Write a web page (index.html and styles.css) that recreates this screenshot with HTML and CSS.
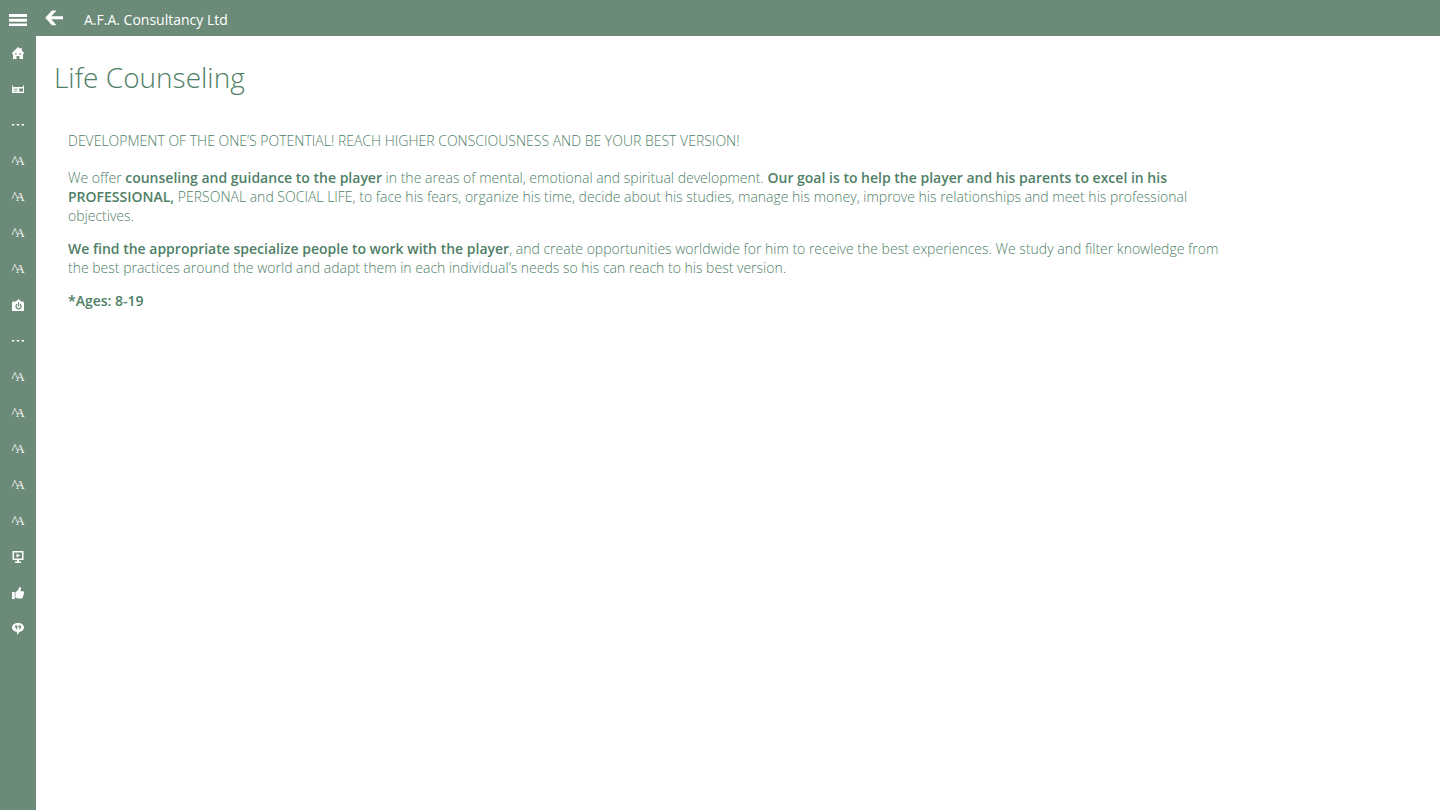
FILE: index.html
```
<!DOCTYPE html>
<html lang="en">
<head>
    <meta charset="UTF-8">
    <meta name="viewport" content="width=device-width, initial-scale=1.0">
    <title>A.F.A. Consultancy Ltd</title>
    <link rel="stylesheet" href="styles.css">
</head>
<body>
    <!-- Icon shapes used more than once -->
    <svg class="defs" aria-hidden="true">
        <symbol id="dots" viewBox="0 0 12 12">
            <path d="M0 5h2.4v1.6H0zM4.8 5h2.4v1.6H4.8zM9.6 5H12v1.6H9.6z"/>
        </symbol>
    </svg>

    <header class="topbar">
        <button type="button" class="menu-button" aria-label="Menu">
            <svg width="18" height="12" viewBox="0 0 18 12"><path d="M0 0h18v3H0zM0 4.7h18v3H0zM0 9.4h18v2.6H0z"/></svg>
        </button>
        <button type="button" class="back-button" aria-label="Back">
            <svg width="18" height="16" viewBox="0 0 18 16"><path d="M7 .5h4.5L6.3 6.3H18v3H6.3l5.2 5.9H7L.2 7.8z"/></svg>
        </button>
        <span class="app-title">A.F.A. Consultancy Ltd</span>
    </header>

    <div class="layout">
        <nav class="sidebar">
            <a href="#" aria-label="Home"><svg viewBox="0 0 12 12"><path fill-rule="evenodd" d="M6 0l2.2 2V1h1.6v2.6L12 6v1h-1v5H7.5V9h-3v3H1V7H0V6zM3.2 6v1.5h1.3V6zM7.5 6v1.5h1.3V6z"/></svg></a>
            <a href="#" aria-label="News"><svg viewBox="0 0 12 12"><path fill-rule="evenodd" d="M0 2.5h1V4h10V2.500h1V10H0zM1.500 5.800v.7h4v-.7zM1.500 7.700v.7h4v-.7zM7.300 5.600v2.800H11V5.600z"/></svg></a>
            <a href="#" aria-label="More"><svg><use href="#dots"/></svg></a>
            <a href="#" class="letters"><small>^</small>A</a>
            <a href="#" class="letters"><small>^</small>A</a>
            <a href="#" class="letters"><small>^</small>A</a>
            <a href="#" class="letters"><small>^</small>A</a>
            <a href="#" aria-label="Photos"><svg viewBox="0 0 12 12"><path fill-rule="evenodd" d="M0 3.500L1 2.500h3L6.500 0 9 2.500h2l1 1V12H0zM5.300 4.500a3.100 3.100 0 1 0 2.500 0v1.400a1.800 1.800 0 1 1-2.500 0zM6 3v4.500h1.100V3z"/></svg></a>
            <a href="#" aria-label="More"><svg><use href="#dots"/></svg></a>
            <a href="#" class="letters"><small>^</small>A</a>
            <a href="#" class="letters"><small>^</small>A</a>
            <a href="#" class="letters"><small>^</small>A</a>
            <a href="#" class="letters"><small>^</small>A</a>
            <a href="#" class="letters"><small>^</small>A</a>
            <a href="#" aria-label="Videos"><svg viewBox="0 0 12 12"><path fill-rule="evenodd" d="M.5 0h11v9H7v1.500h2V12H3v-1.500h2V9H.5zM2 1.400v6.200h8V1.400zM4.500 2.500l3.700 2-3.700 2z"/></svg></a>
            <a href="#" aria-label="Like"><svg viewBox="0 0 12 12"><path d="M0 5h2.700v7H0zM3.400 5.400L6.200 3 7.400 0c1.500 0 1.800 1 1.600 2l-.7 2.300h2.800c1.100 0 1.100 1.300.6 1.700.5.500.3 1.400-.3 1.700.2.700 0 1.300-.5 1.600.2.900-.2 2.200-1.400 2.200H6.300c-1.200 0-1.800-.6-2.900-.7z"/></svg></a>
            <a href="#" aria-label="Contact"><svg viewBox="0 0 12 12"><path fill-rule="evenodd" d="M6 0c3.500 0 6 1.900 6 4.400S9.800 8.600 7.700 8.800L5 12V8.800C2.300 8.500 0 6.900 0 4.400S2.500 0 6 0zM3 2.600v2h1.300L3.500 6.500h1L5.500 4.300V2.600zM6.500 2.600v2h1.300L7 6.500h1L9 4.300V2.600z"/></svg></a>
        </nav>

        <main class="content">
            <h1>Life Counseling</h1>
            <article>
                <p class="lead">DEVELOPMENT OF THE ONE’S POTENTIAL! REACH HIGHER CONSCIOUSNESS AND BE YOUR BEST VERSION!</p>
                <p>We offer <b>counseling and guidance to the player</b> in the areas of mental, emotional and spiritual development. <b>Our goal is to help the player and his parents to excel in his PROFESSIONAL,</b> PERSONAL and SOCIAL LIFE, to face his fears, organize his time, decide about his studies, manage his money, improve his relationships and meet his professional objectives.</p>
                <p><b>We find the appropriate specialize people to work with the player</b>, and create opportunities worldwide for him to receive the best experiences. We study and filter knowledge from the best practices around the world and adapt them in each individual’s needs so his can reach to his best version.</p>
                <p><b>*Ages: 8-19</b></p>
            </article>
        </main>
    </div>
</body>
</html>
```
FILE: styles.css
```
body {
    margin: 0;
    min-height: 100vh;
    display: flex;
    flex-direction: column;
    font-family: "Open Sans", "Noto Sans", sans-serif;
    font-size: 14px;
    font-weight: 300;
    line-height: 19px;
    color: #4f8067;
    background-color: white;
}

.defs {
    position: absolute;
    width: 0;
    height: 0;
}

svg {
    display: block;
    fill: white;
}

.topbar {
    height: 36px;
    display: flex;
    align-items: center;
    background-color: #6b8a78;
    color: white;
}

.topbar button {
    width: 36px;
    height: 36px;
    padding: 0;
    border: none;
    background: none;
    display: flex;
    align-items: center;
    justify-content: center;
    cursor: pointer;
}

.topbar .menu-button {
    padding-top: 4px;
}

.app-title {
    margin-left: 12px;
    padding-top: 2px;
    font-size: 14px;
    font-weight: 400;
}

.layout {
    flex: 1;
    display: flex;
}

.sidebar {
    width: 36px;
    flex-shrink: 0;
    background-color: #6b8a78;
}

.sidebar a {
    height: 34px;
    padding-bottom: 2px;
    display: flex;
    align-items: center;
    justify-content: center;
    color: white;
    text-decoration: none;
}

.sidebar svg {
    width: 12px;
    height: 12px;
}

.sidebar .letters {
    font-family: "Liberation Serif", serif;
    font-size: 12px;
    font-weight: 400;
}

.letters small {
    margin-right: -2px;
    font-size: 14px;
}

.content {
    flex: 1;
    padding: 21px 18px;
}

h1 {
    margin: 0;
    font-size: 28px;
    font-weight: 300;
    line-height: 40px;
}

article {
    max-width: 1164px;
    margin-top: 34px;
    padding-left: 14px;
}

p {
    margin: 0 0 14px;
}

.lead {
    margin-bottom: 18px;
}

b {
    font-weight: 600;
}
```
